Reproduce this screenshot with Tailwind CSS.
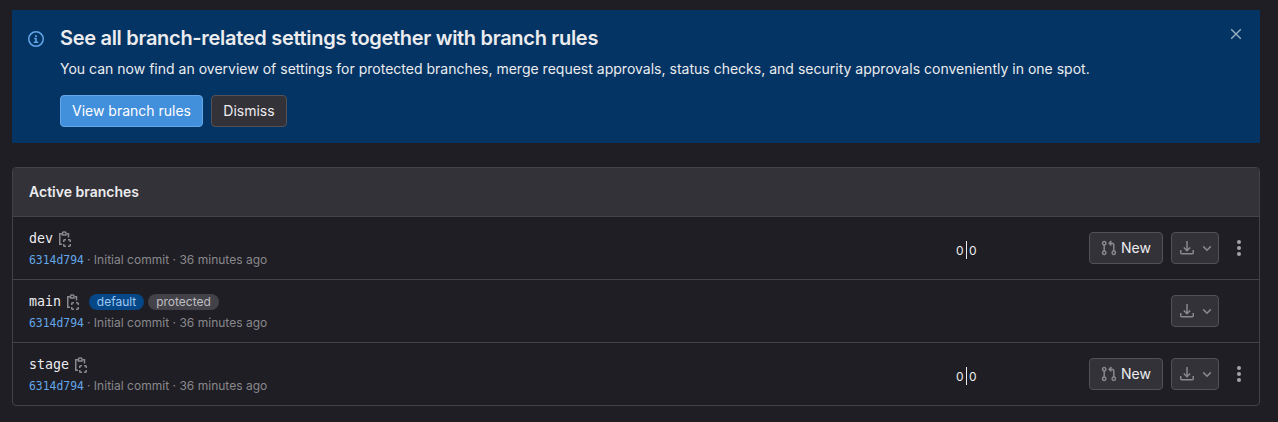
<!DOCTYPE html>
<html lang="en">
<head>
<meta charset="utf-8">
<title>Branches</title>
<script src="https://cdn.jsdelivr.net/npm/@tailwindcss/browser@4"></script>
</head>
<body class="min-h-screen bg-[#1f1e24] pt-2.5 pl-3 pr-[18px] font-[Inter,sans-serif] text-sm text-[#ececef] whitespace-nowrap">
<svg class="hidden">
  <symbol id="clip" viewBox="0 0 16 16" fill="none" stroke="currentColor" stroke-width="1.5">
    <path d="M5 13.25H2.75V2.75H5M10 2.75h1.5V6.5M5.5 3.9V1.9a1 1 0 0 1 1-1h1.5a1 1 0 0 1 1 1v2z"/>
    <path d="M6.75 11V9.5a.75.75 0 0 1 .75-.75H9M11 8.75h1.5a.75.75 0 0 1 .75.75V11M13.25 13v1.5a.75.75 0 0 1-.75.75H11M9 15.25H7.5a.75.75 0 0 1-.75-.75V13"/>
  </symbol>
  <symbol id="mr" viewBox="0 0 16 16" fill="none" stroke="currentColor" stroke-width="1.5">
    <circle cx="3.2" cy="3.2" r="1.7"/><circle cx="3.2" cy="12.8" r="1.7"/><circle cx="12.8" cy="12.8" r="1.7"/>
    <path d="M3.2 4.9v6.2M12.8 11.1V5.2a2 2 0 0 0-2-2H8.6M10.4 1 8.2 3.2l2.2 2.2"/>
  </symbol>
  <symbol id="down" viewBox="0 0 16 16" fill="none" stroke="currentColor" stroke-width="1.5">
    <path d="M8 1v9.5M4.8 7.5 8 10.7l3.2-3.2M1.75 10v2.75a1 1 0 0 0 1 1h10.5a1 1 0 0 0 1-1V10"/>
  </symbol>
  <symbol id="chev" viewBox="0 0 16 16" fill="none" stroke="currentColor" stroke-width="1.5"><path d="M4.2 6.4 8 10.2l3.8-3.8"/></symbol>
  <symbol id="dots" viewBox="0 0 16 16" fill="currentColor"><circle cx="8" cy="2" r="2"/><circle cx="8" cy="8" r="2"/><circle cx="8" cy="14" r="2"/></symbol>
</svg>

<section class="flex h-[133px] bg-[#033464] px-4 pt-4">
  <svg class="mt-[5px] size-4 shrink-0 text-[#63a6e9]" viewBox="0 0 16 16" fill="none" stroke="currentColor" stroke-width="1.5"><circle cx="8" cy="8" r="7.25"/><path d="M6.2 7.5H8v4M5.8 11.25h4.4"/><circle cx="8" cy="4.9" r="1" fill="currentColor" stroke="none"/></svg>
  <div class="ml-4 grow">
    <h2 class="h-6 text-[20px] leading-6 font-semibold tracking-[-0.3px]">See all branch-related settings together with branch rules</h2>
    <p class="mt-[9px] h-5 leading-5 tracking-[0.01px]">You can now find an overview of settings for protected branches, merge request approvals, status checks, and security approvals conveniently in one spot.</p>
    <div class="mt-4 flex gap-2">
      <button class="h-8 w-[143px] rounded-[4px] border border-[#63a6e9] bg-[#428fdc] text-white">View branch rules</button>
      <button class="h-8 w-[76px] rounded-[4px] border border-[#535158] bg-[#333238]">Dismiss</button>
    </div>
  </div>
  <svg class="size-4 shrink-0 text-[#9aaec2]" viewBox="0 0 16 16" fill="none" stroke="currentColor" stroke-width="1.4"><path d="m3.2 3.2 9.6 9.6m0-9.6-9.6 9.6"/></svg>
</section>

<section class="mt-6 h-[239px] overflow-hidden rounded-[4px] border border-[#434248]">
  <h3 class="h-[49px] border-b border-[#434248] bg-[#333238] pl-4 leading-[48px] font-semibold">Active branches</h3>
  <ul>
    <li class="flex h-[63px] border-b border-[#434248] pl-4">
      <div class="w-[927px] pt-3">
        <div class="flex h-5 items-center"><a class="font-['DejaVu_Sans_Mono',monospace] text-[13.3px]">dev</a><svg class="ml-1 size-4 text-[#89888d]"><use href="#clip"/></svg></div>
        <div class="mt-[3px] flex h-4 items-center text-xs text-[#89888d]"><a class="w-[55px] pt-px font-['DejaVu_Sans_Mono',monospace] text-[11.4px] text-[#63a6e9]">6314d794</a><span class="ml-[3px] tracking-[0.02px]">· Initial commit · 36 minutes ago</span></div>
      </div>
      <div class="flex w-[133px] pt-6 text-xs"><span class="w-2.5 pt-0.5">0</span><span class="mr-[2px] h-[18px] w-px bg-[#ececef]"></span><span class="pt-0.5">0</span></div>
      <div class="flex items-center">
        <button class="flex h-8 w-[74px] items-center rounded-[4px] border border-[#535158] bg-[#333238] pl-[11px]"><svg class="size-4 text-[#89888d]"><use href="#mr"/></svg><span class="ml-1">New</span></button>
        <button class="ml-2 flex h-8 w-12 items-center rounded-[4px] border border-[#535158] bg-[#333238] pl-[7px] text-[#89888d]"><svg class="size-4"><use href="#down"/></svg><svg class="ml-1 size-4"><use href="#chev"/></svg></button>
        <svg class="ml-3 size-4 text-[#a4a3a8]"><use href="#dots"/></svg>
      </div>
    </li>
    <li class="flex h-[63px] border-b border-[#434248] pl-4">
      <div class="w-[1142px] pt-3">
        <div class="flex h-5 items-center"><a class="font-['DejaVu_Sans_Mono',monospace] text-[13.3px]">main</a><svg class="ml-1 size-4 text-[#89888d]"><use href="#clip"/></svg><span class="ml-2 h-4 w-[55px] rounded-full bg-[#064787] text-center text-xs leading-4 text-[#9dc7f1]">default</span><span class="ml-1 h-4 w-[71px] rounded-full bg-[#434248] text-center text-xs leading-4 text-[#bfbfc3]">protected</span></div>
        <div class="mt-[3px] flex h-4 items-center text-xs text-[#89888d]"><a class="w-[55px] pt-px font-['DejaVu_Sans_Mono',monospace] text-[11.4px] text-[#63a6e9]">6314d794</a><span class="ml-[3px] tracking-[0.02px]">· Initial commit · 36 minutes ago</span></div>
      </div>
      <div class="flex items-center">
        <button class="flex h-8 w-12 items-center rounded-[4px] border border-[#535158] bg-[#333238] pl-[7px] text-[#89888d]"><svg class="size-4"><use href="#down"/></svg><svg class="ml-1 size-4"><use href="#chev"/></svg></button>
      </div>
    </li>
    <li class="flex h-[63px] border-b border-[#434248] pl-4">
      <div class="w-[927px] pt-3">
        <div class="flex h-5 items-center"><a class="font-['DejaVu_Sans_Mono',monospace] text-[13.3px]">stage</a><svg class="ml-1 size-4 text-[#89888d]"><use href="#clip"/></svg></div>
        <div class="mt-[3px] flex h-4 items-center text-xs text-[#89888d]"><a class="w-[55px] pt-px font-['DejaVu_Sans_Mono',monospace] text-[11.4px] text-[#63a6e9]">6314d794</a><span class="ml-[3px] tracking-[0.02px]">· Initial commit · 36 minutes ago</span></div>
      </div>
      <div class="flex w-[133px] pt-6 text-xs"><span class="w-2.5 pt-0.5">0</span><span class="mr-[2px] h-[18px] w-px bg-[#ececef]"></span><span class="pt-0.5">0</span></div>
      <div class="flex items-center">
        <button class="flex h-8 w-[74px] items-center rounded-[4px] border border-[#535158] bg-[#333238] pl-[11px]"><svg class="size-4 text-[#89888d]"><use href="#mr"/></svg><span class="ml-1">New</span></button>
        <button class="ml-2 flex h-8 w-12 items-center rounded-[4px] border border-[#535158] bg-[#333238] pl-[7px] text-[#89888d]"><svg class="size-4"><use href="#down"/></svg><svg class="ml-1 size-4"><use href="#chev"/></svg></button>
        <svg class="ml-3 size-4 text-[#a4a3a8]"><use href="#dots"/></svg>
      </div>
    </li>
  </ul>
</section>
</body>
</html>
